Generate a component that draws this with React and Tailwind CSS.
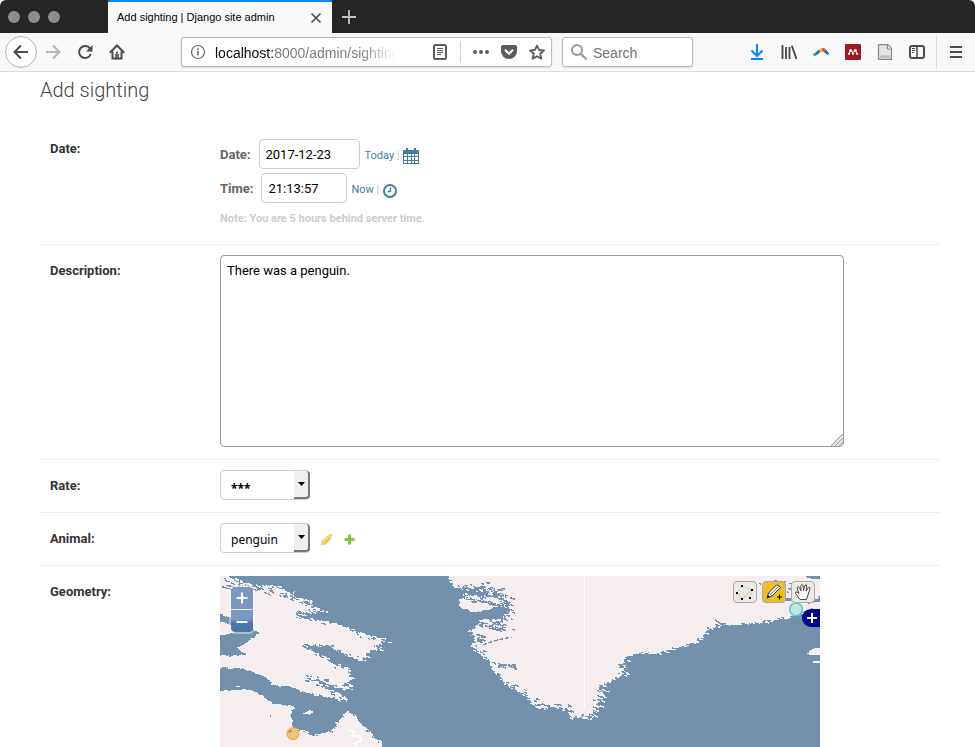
import React, { useState } from 'react';

// small repeatable generator, so the coast is the same on each render
const makeRandom = (seed) => {
  let s = seed * 7919;
  return () => {
    s = (s * 16807) % 2147483647;
    return s / 2147483647;
  };
};

// turns a rough outline into a ragged, stair-stepped shoreline
const coast = (points, seed, size = 9) => {
  const rnd = makeRandom(seed);
  let d = `M${points[0][0]} ${points[0][1]}`;
  for (let i = 1; i < points.length; i++) {
    const [x0, y0] = points[i - 1];
    const [x1, y1] = points[i];
    const outside = (x0 === x1 && Math.abs(y1 - y0) > 200) || (y0 === y1 && (y0 < 0 || y0 > 530));
    const steps = outside ? 1 : Math.max(1, Math.round(Math.hypot(x1 - x0, y1 - y0) / 7));
    for (let n = 1; n <= steps; n++) {
      const wob = n === steps ? 0 : 1;
      const x = x0 + ((x1 - x0) * n) / steps + (rnd() - 0.5) * size * 2 * wob;
      const y = y0 + ((y1 - y0) * n) / steps + (rnd() - 0.5) * size * wob;
      d += `L${x.toFixed(0)} ${y.toFixed(0)}`;
    }
  }
  return d + 'Z';
};

// short dashes scattered beside a shoreline
const flecks = (points, seed, count, spread) => {
  const rnd = makeRandom(seed);
  let d = '';
  for (let i = 0; i < count; i++) {
    const k = Math.floor(rnd() * (points.length - 1));
    const t = rnd();
    const x = points[k][0] + (points[k + 1][0] - points[k][0]) * t + (rnd() - 0.5) * spread * 2;
    const y = points[k][1] + (points[k + 1][1] - points[k][1]) * t + (rnd() - 0.5) * spread;
    d += `M${x.toFixed(0)} ${y.toFixed(0)}l${(4 + rnd() * 10).toFixed(0)} ${(rnd() * 5).toFixed(0)}`;
  }
  return d;
};

const baffin = [
  [-20, 0], [30, 0], [50, 28], [80, 42], [125, 48], [180, 50], [235, 72], [190, 78], [290, 92],
  [255, 102], [325, 122], [265, 116], [290, 130], [230, 130], [270, 148], [330, 155], [400, 178],
  [440, 195], [470, 205], [512, 212], [480, 224], [490, 236], [450, 245], [438, 270], [400, 258],
  [350, 228], [310, 222], [262, 226], [300, 250], [350, 280], [395, 300], [415, 325], [385, 340],
  [405, 356], [370, 352], [310, 325], [255, 312], [300, 335], [345, 362], [398, 388], [360, 384],
  [300, 372], [235, 352], [185, 345], [150, 318], [110, 302], [60, 292], [-20, 290], [-20, 262],
  [70, 260], [100, 248], [66, 232], [120, 205], [135, 192], [115, 172], [80, 165], [40, 138],
  [-20, 128],
];
const labrador = [
  [-20, 368], [60, 362], [110, 362], [150, 385], [180, 405], [234, 410], [228, 445], [232, 475],
  [262, 482], [290, 500], [345, 485], [375, 455], [400, 425], [425, 445], [440, 470], [475, 500],
  [500, 520], [500, 560], [-20, 560],
];
const greenlandWest = [
  [98, 0], [92, 38], [115, 52], [150, 48], [190, 62], [225, 70], [250, 90], [200, 85], [130, 75],
  [160, 90], [225, 108], [250, 100], [270, 125], [250, 150], [180, 152], [152, 188], [168, 205],
  [160, 225], [180, 250], [205, 265], [222, 300], [255, 330], [280, 355], [315, 370], [350, 412],
  [400, 408], [435, 415], [450, 435], [500, 445], [520, 430], [530, 400], [550, 375], [538, 350],
  [580, 330], [608, 312], [600, 280], [615, 265],
];
const greenlandEast = [
  [625, 255], [650, 250], [725, 247], [780, 230], [830, 212], [862, 178], [890, 168], [905, 160],
  [980, 160], [1050, 150], [1110, 142], [1145, 130], [1200, 112],
];
const greenland = [...greenlandWest, ...greenlandEast, [1210, 0]];

const CoastMap = () => (
  <svg
    viewBox="15 18 1800 513"
    className="block h-full w-full"
    shapeRendering="crispEdges"
    preserveAspectRatio="xMidYMin slice"
    aria-hidden="true"
  >
    <rect x="0" y="0" width="1830" height="560" fill="#7391ad" />
    <g fill="#f5edee" stroke="#f0f3fb" strokeWidth="4">
      <path d={coast(baffin, 71)} />
      <path d={coast(labrador, 29, 6)} />
      <g transform="translate(615 0)">
        <path d={coast(greenland, 53)} />
      </g>
      <path d="M-10 158l35 0 25 12 12 14-30 8-40 0z" />
      <path d="M270 430l14-8 8 4-8 6zM62 349h14" />
      <path d="M1785 244l12-6 30-4v18h-42zM1795 276h30" strokeWidth="5" />
      <path d="M1775 250h14" />
    </g>
    <g fill="#7391ad">
      <path d="M1770 18h50v8l-20 2-22-5zM1668 86l80 3 70-4v10h-70l-60-4z" />
      <path d="M750 54l50 4 70 20-10 8-60-14-55-6z" />
      <path d={coast([[720, 78], [765, 86], [830, 96], [868, 112], [862, 146], [800, 146], [725, 146], [715, 100]], 19, 5)} />
    </g>
    <g fill="#f5edee" stroke="#f0f3fb" strokeWidth="4">
      <path d={coast([[735, 90], [775, 92], [835, 110], [820, 118], [775, 124], [738, 110], [735, 90]], 8, 4)} />
    </g>
    <g fill="none" stroke="#f0f3fb" strokeWidth="4">
      <path d={flecks(baffin.slice(2, 42), 41, 150, 10)} />
      <g transform="translate(615 0)">
        <path d={flecks(greenlandWest, 61, 260, 13)} />
        <path d={flecks(greenlandEast, 13, 50, 6)} />
      </g>
    </g>
    <g fill="none" stroke="#7391ad" strokeWidth="4">
      <path d={flecks(baffin.slice(2, 42), 17, 130, 13)} />
      <path d={flecks([[20, 25], [60, 45], [130, 55], [230, 85], [290, 110]], 31, 40, 16)} />
      <path d={flecks(labrador.slice(4, 17), 23, 30, 9)} />
      <g transform="translate(615 0)">
        <path d={flecks(greenlandWest.slice(1, 36), 37, 220, 19)} />
        <path d={flecks([[170, 165], [265, 172]], 87, 40, 22)} />
        <path d={flecks([[180, 40], [250, 70], [265, 130]], 47, 45, 16)} />
        <path d={flecks([[240, 285], [280, 292]], 67, 18, 15)} />
        <path d={flecks(greenlandEast, 97, 45, 9)} />
        <path d={flecks([[1025, 30], [1180, 90]], 59, 24, 40)} />
        <path d="M190 225l20-8 20-6 25-6 20-3" strokeDasharray="12 5" />
      </g>
      <path d="M20 50l30 8M165 438h4M1500 148l14 12 10 6" />
    </g>
    <path d="M395 480l25 5-10 14 24-2 5 14-20 10 12 14" fill="none" stroke="#ffffff" strokeWidth="5" />
    <path d="M1107 18v395" stroke="#ffffff" strokeWidth="3" />
    <g shapeRendering="auto">
      <circle cx="234" cy="491" r="18" fill="#f0c27c" stroke="#eba42e" strokeWidth="3" />
      <path d="M219 487l8-8 5 3-8 6z" fill="#9c8862" />
      <circle cx="1743" cy="118" r="19" fill="#c8e4e4" stroke="#5fcccd" strokeWidth="5" />
    </g>
  </svg>
);

const ToolButton = ({ label, children }) => (
  <button type="button" aria-label={label} className="flex size-8 shrink-0 items-center justify-center">
    {children}
  </button>
);

const Glyph = ({ children, color = 'text-[#4a4a4f]' }) => (
  <svg
    width="16"
    height="16"
    viewBox="0 0 16 16"
    fill="none"
    stroke="currentColor"
    strokeWidth="2"
    className={`shrink-0 ${color}`}
    aria-hidden="true"
  >
    {children}
  </svg>
);

const TabBar = () => (
  <div className="flex h-[33px] shrink-0 rounded-t-md bg-[#252525]">
    <div className="flex w-[108px] items-center gap-2 pl-2">
      <span className="size-3 rounded-full bg-[#8e8c93]" />
      <span className="size-3 rounded-full bg-[#8e8c93]" />
      <span className="size-3 rounded-full bg-[#8e8c93]" />
    </div>
    <div className="flex w-56 items-center justify-between border-t-2 border-[#0a84ff] bg-[#f9f9fa] pr-2 pl-[9px] text-black">
      <span className="text-[11px] whitespace-nowrap">Add sighting | Django site admin</span>
      <button type="button" aria-label="Close tab">
        <Glyph><path d="M3.5 3.5l9 9M12.5 3.5l-9 9" strokeWidth="1.6" /></Glyph>
      </button>
    </div>
    <button type="button" aria-label="New tab" className="flex w-[34px] items-center justify-center">
      <Glyph color="text-[#c4c4c6]"><path d="M8 1v14M1 8h14" strokeWidth="1.8" /></Glyph>
    </button>
  </div>
);

const NavBar = () => {
  const [url, setUrl] = useState('localhost:8000/admin/sighting');

  return (
    <div className="flex h-[39px] shrink-0 items-center border-b border-[#dcdcdc] bg-[#f9f9fa] pl-[5px]">
      <button
        type="button"
        aria-label="Back"
        className="flex size-8 shrink-0 items-center justify-center rounded-full border border-[#b5b5b7] bg-white"
      >
        <Glyph><path d="M15 8H1.5M8 1.5L1.5 8 8 14.5" /></Glyph>
      </button>
      <ToolButton label="Forward">
        <Glyph color="text-[#b5b5b7]"><path d="M1 8h13.5M8 1.5L14.5 8 8 14.5" /></Glyph>
      </ToolButton>
      <ToolButton label="Reload">
        <Glyph>
          <path d="M13 4.5A6 6 0 1 0 13.8 10" />
          <path d="M15.5 1v6.5H9z" fill="currentColor" stroke="none" />
        </Glyph>
      </ToolButton>
      <ToolButton label="Home">
        <Glyph>
          <path d="M.8 8.8L8 1.5l7.2 7.3M3.5 7.5v7h9v-7" />
          <path d="M7 8.5h2M7 10.5h2v4H7z" strokeWidth="1.5" />
        </Glyph>
      </ToolButton>

      <div className="ml-12 flex h-[30px] min-w-0 flex-1 items-center rounded-[3px] border border-[#b9b9bb] bg-white pr-[6px] pl-2 shadow-sm">
        <Glyph color="text-[#6b6b6e]">
          <circle cx="8" cy="8" r="6.5" strokeWidth="1.2" />
          <path d="M8 7v4.5M8 4.3v1.7" strokeWidth="1.6" />
        </Glyph>
        <input
          type="text"
          aria-label="Address"
          value={url}
          onChange={(e) => setUrl(e.target.value)}
          className="ml-[9px] w-[182px] min-w-0 flex-1 bg-[linear-gradient(90deg,#0c0c0d_58px,#77777a_58px,#77777a_145px,transparent_182px)] bg-clip-text pt-[2px] text-sm text-transparent outline-none"
        />
        <button type="button" aria-label="Reader view" className="ml-4">
          <Glyph color="text-[#5c5c60]">
            <rect x="2" y="1" width="12" height="14" rx="1.5" />
            <path d="M5 4.5h6M5 6.5h6M5 8.5h6M5 10.5h4" strokeWidth="1" />
          </Glyph>
        </button>
        <span className="mx-3 h-[22px] w-px bg-[#d2d2d4]" />
        <div className="flex gap-3">
          <button type="button" aria-label="Page actions">
            <Glyph color="text-[#5c5c60]">
              <g fill="currentColor" stroke="none">
                <circle cx="2" cy="8" r="2" />
                <circle cx="8" cy="8" r="2" />
                <circle cx="14" cy="8" r="2" />
              </g>
            </Glyph>
          </button>
          <button type="button" aria-label="Save to Pocket">
            <Glyph color="text-[#5c5c60]">
              <path d="M2 1h12a2 2 0 0 1 2 2v4.5a8 7.5 0 0 1-16 0V3a2 2 0 0 1 2-2z" fill="currentColor" stroke="none" />
              <path d="M4 5.8l4 4 4-4" stroke="#fff" />
            </Glyph>
          </button>
          <button type="button" aria-label="Bookmark this page">
            <Glyph color="text-[#5c5c60]">
              <path d="M8 1.5l2 4.500 5 .5-3.800 3.300 1.200 4.900L8 12.200l-4.400 2.500 1.200-4.900L1 6.500 6 6z" strokeWidth="1.8" strokeLinejoin="round" />
            </Glyph>
          </button>
        </div>
      </div>

      <div className="ml-[10px] flex h-[30px] w-[131px] shrink-0 items-center gap-[6px] rounded-[3px] border border-[#b9b9bb] bg-white px-2 shadow-sm">
        <Glyph color="text-[#98989b]">
          <circle cx="6" cy="6" r="5" />
          <path d="M9.5 9.5l6 6" />
        </Glyph>
        <input
          type="search"
          aria-label="Search"
          placeholder="Search"
          className="w-full min-w-0 pt-[2px] text-sm outline-none placeholder:text-[#737377]"
        />
      </div>

      <div className="ml-12 flex shrink-0">
        <ToolButton label="Downloads">
          <Glyph color="text-[#0a84ff]"><path d="M8 0v12M2.5 6.5L8 12l5.5-5.5M2 15h12" /></Glyph>
        </ToolButton>
        <ToolButton label="Library">
          <Glyph><path d="M1.5 1v14M5 3v12M8.5 3v12M10.8 1.8L15.5 15" strokeWidth="1.9" /></Glyph>
        </ToolButton>
        <ToolButton label="Rainbow add-on">
          <Glyph>
            <path d="M.8 11.5l4-3" stroke="#3e9e63" strokeWidth="2.8" />
            <path d="M3.5 9.5L7 6.5" stroke="#2470a8" strokeWidth="2.6" />
            <path d="M6.5 7l3-1.500" stroke="#efb643" strokeWidth="3.4" />
            <path d="M9 5.5q2 0 3.5 2" stroke="#e2543f" strokeWidth="3.4" />
            <path d="M12 7l3.3 3" stroke="#24699c" strokeWidth="2.6" />
          </Glyph>
        </ToolButton>
        <ToolButton label="Mendeley">
          <Glyph>
            <rect width="16" height="16" rx="1" fill="#9d1a20" stroke="none" />
            <g fill="#fff" stroke="none">
              <circle cx="5.7" cy="6.5" r="1.5" />
              <circle cx="10.3" cy="6.5" r="1.5" />
              <circle cx="3.9" cy="9.8" r="1.1" />
              <circle cx="8" cy="9.5" r="1.2" />
              <circle cx="12.1" cy="9.8" r="1.1" />
            </g>
            <path d="M3.9 9.8l1.8-3.3L8 8.5l2.3-2 1.8 3.3" stroke="#fff" strokeWidth="1" />
          </Glyph>
        </ToolButton>
        <ToolButton label="Page">
          <Glyph color="text-[#868688]">
            <path d="M1.5.7h9.5l3.5 3.5v11.1h-13z" fill="#e3e3e3" strokeWidth="1.2" />
            <path d="M10.5 1v4h4" fill="#fff" strokeWidth="1" />
            <path d="M3 11.5h10v2.2H3z" fill="#b9b9b9" stroke="none" />
          </Glyph>
        </ToolButton>
        <ToolButton label="Sidebar">
          <Glyph>
            <rect x="1" y="2" width="14" height="12" rx="2" />
            <path d="M8 2v12" strokeWidth="1.5" />
            <path d="M3 4.5h3M3 6.5h3M3 8.5h2" strokeWidth="1" />
          </Glyph>
        </ToolButton>
      </div>
      <span className="ml-[3px] h-8 w-px bg-[#dcdcdc]" />
      <button type="button" aria-label="Menu" className="flex w-[38px] items-center justify-center">
        <Glyph><path d="M2 3h12M2 8h12M2 13h12" /></Glyph>
      </button>
    </div>
  );
};

const FormRow = ({ label, htmlFor, tall, last, children }) => (
  <div className={`flex px-[10px] pt-[10px] ${last ? '' : 'border-b border-[#eeeeee] pb-3'}`}>
    <label
      htmlFor={htmlFor}
      className={`w-[170px] shrink-0 text-[13px] leading-4 font-bold text-[#333333] ${tall ? 'pt-[2px]' : 'pt-2'}`}
    >
      {label}
    </label>
    <div className="min-w-0 flex-1">{children}</div>
  </div>
);

const SelectBox = ({ id, options, textClass = 'pt-[3px]' }) => (
  <div className="relative h-[30px] w-[90px]">
    <select
      id={id}
      className={`size-full appearance-none rounded border border-[#cccccc] bg-white pl-[10px] font-['Noto_Sans',sans-serif] text-xs text-black ${textClass}`}
    >
      {options.map((o) => (
        <option key={o}>{o}</option>
      ))}
    </select>
    <span className="pointer-events-none absolute inset-y-px right-0 flex w-4 items-center justify-center rounded-r border-r-2 border-b-2 border-[#777777] bg-[#efefef]">
      <svg width="7" height="4" viewBox="0 0 7 4" aria-hidden="true"><path d="M0 0h7L3.5 4z" /></svg>
    </span>
  </div>
);

const MapTools = () => (
  <>
    <div className="absolute top-[11px] left-[11px] flex flex-col gap-px rounded-sm text-white outline-2 outline-white/40">
      <button type="button" aria-label="Zoom in" className="flex h-[22px] w-[22px] items-center justify-center rounded-t bg-[#7b98c0]">
        <Glyph color="text-white"><path d="M8 2.5v11M2.5 8h11" /></Glyph>
      </button>
      <button
        type="button"
        aria-label="Zoom out"
        className="flex h-[22px] w-[22px] items-center justify-center rounded-b bg-linear-to-b from-[#7b98c0] from-40% to-[#4d76a8] to-60%"
      >
        <Glyph color="text-white"><path d="M2.5 9h11" /></Glyph>
      </button>
    </div>
    <div className="absolute top-[5px] right-[5px] flex gap-[5px]">
      <button type="button" aria-label="Edit shape" className="flex h-[22px] w-6 items-center justify-center rounded border border-[#a9a9a5] bg-[#ebebe5]">
        <svg width="20" height="18" viewBox="0 0 20 18" aria-hidden="true">
          <path d="M2 10l5-7 10 4-2 8" fill="none" stroke="#d5d5d0" />
          <path d="M2 10l5 6L17 7" fill="none" stroke="#f0aaa0" />
          <path d="M1 9h2v2H1zM6 2h2v2H6zM16 6h2v2h-2zM14 14h2v2h-2zM6 15h2v2H6z" />
        </svg>
      </button>
      <button type="button" aria-label="Draw point" className="flex h-[22px] w-6 items-center justify-center rounded border border-[#a9a9a5] bg-[#efbc2b]">
        <svg width="20" height="18" viewBox="0 0 20 18" aria-hidden="true">
          <path d="M3 15l1.5-5L13 1.5l3.5 3L8 13z" fill="#fff" stroke="#333" />
          <path d="M6 12l8-8M4.5 10L8 13" stroke="#777" />
          <path d="M3 15l1-3 2 2z" />
          <path d="M15.5 11.5v5M13 14h5" stroke="#000" />
        </svg>
      </button>
      <button type="button" aria-label="Pan" className="flex h-[22px] w-6 items-center justify-center rounded border border-[#a9a9a5] bg-[#ebebe5]">
        <svg width="20" height="18" viewBox="0 0 20 18" aria-hidden="true">
          <path
            d="M7 16.500L2.500 10.500Q2 8.500 4 9l2 1.500L4 4.500q1-2 2.300 0L8 8 7.800 2.500q1.200-2 2.200 0L10.500 7.500l1.300-5q1.500-1.500 2 .5L13 8l2.500-3.500q1.700-.8 1.500 1L15 12l-1.500 4.500z"
            fill="#fff"
            stroke="#444"
          />
        </svg>
      </button>
    </div>
    <button
      type="button"
      aria-label="Switch layer"
      className="absolute top-[33px] right-0 flex h-[18px] w-[18px] items-center justify-center rounded-l-full bg-[#00008b] pl-[2px]"
    >
      <svg width="10" height="10" viewBox="0 0 10 10" aria-hidden="true">
        <path d="M5 0v10M0 5h10" stroke="#fff" strokeWidth="2" />
      </svg>
    </button>
  </>
);

const App = () => {
  const [date, setDate] = useState('2017-12-23');
  const [time, setTime] = useState('21:13:57');
  const [description, setDescription] = useState('There was a penguin.');

  return (
    <div className="flex h-screen flex-col overflow-hidden bg-white font-['Liberation_Sans',Arial,sans-serif]">
      <TabBar />
      <NavBar />

      <main className="min-h-0 flex-1 overflow-hidden pr-[35px] pl-10 font-[Roboto,sans-serif] text-[13px]">
        <h1 className="pt-[6px] text-xl leading-6 font-light text-[#444444]">Add sighting</h1>

        <form className="mt-[27px]">
          <FormRow label="Date:" htmlFor="date" tall>
            <div className="flex h-[30px] items-center">
              <label htmlFor="date" className="mr-2 pt-[2px] font-bold text-[#666666]">Date:</label>
              <input
                id="date"
                type="text"
                value={date}
                onChange={(e) => setDate(e.target.value)}
                className="h-[30px] w-[101px] rounded border border-[#cccccc] px-[6px] text-black"
              />
              <span className="mr-[3px] ml-[5px] pt-1 text-[11px] text-[#cccccc]">
                <a href="#today" className="text-[#447e9b]">Today</a> |
              </span>
              <button type="button" aria-label="Choose a date" className="pt-1">
                <svg width="16" height="16" viewBox="0 0 16 16" aria-hidden="true">
                  <path d="M1 2h14q1 0 1 1v13H0V3q0-1 1-1zM3 0h2v2H3zM11 0h2v2h-2z" fill="#447e9b" />
                  <path d="M1 6h3v2H1zM5 6h3v2H5zM9 6h2v2H9zM12 6h3v2h-3zM1 9h3v3H1zM5 9h3v3H5zM9 9h2v3H9zM12 9h3v3h-3zM1 13h3v2H1zM5 13h3v2H5zM9 13h2v2H9zM12 13h3v2h-3z" fill="#fff" />
                </svg>
              </button>
            </div>
            <div className="mt-1 flex h-[30px] items-center">
              <label htmlFor="time" className="mr-2 pt-[2px] font-bold text-[#666666]">Time:</label>
              <input
                id="time"
                type="text"
                value={time}
                onChange={(e) => setTime(e.target.value)}
                className="h-[30px] w-[86px] rounded border border-[#cccccc] px-[6px] text-black"
              />
              <span className="mr-[3px] ml-1 pt-1 text-[11px] text-[#cccccc]">
                <a href="#now" className="text-[#447e9b]">Now</a> |
              </span>
              <button type="button" aria-label="Choose a time" className="pt-1">
                <svg width="16" height="16" viewBox="0 0 16 16" fill="none" stroke="#447e9b" aria-hidden="true">
                  <circle cx="8" cy="9" r="6" strokeWidth="2" />
                  <path d="M8.5 5.5V9.500H5.500" strokeWidth="1.3" />
                </svg>
              </button>
            </div>
            <p className="mt-2 mb-[6px] text-[11px] leading-[15px] font-bold text-[#cccccc]">
              Note: You are 5 hours behind server time.
            </p>
          </FormRow>

          <FormRow label="Description:" htmlFor="description">
            <div className="relative max-w-[624px]">
              <textarea
                id="description"
                value={description}
                onChange={(e) => setDescription(e.target.value)}
                className="block h-48 w-full resize-none rounded border border-[#999999] px-[6px] py-[5px] text-[13px] leading-5 text-black"
              />
              <svg width="12" height="12" viewBox="0 0 12 12" className="absolute right-px bottom-px" aria-hidden="true">
                <path d="M0 12L12 0M4 12l8-8M8 12l4-4" stroke="#a0a0a0" strokeWidth="1.2" />
                <path d="M2 12L12 2M6 12l6-6" stroke="#eeeeee" />
              </svg>
            </div>
          </FormRow>

          <FormRow label="Rate:" htmlFor="rate">
            <SelectBox id="rate" options={['***', '**', '*']} textClass="pt-[7px] font-bold" />
          </FormRow>

          <FormRow label="Animal:" htmlFor="animal">
            <div className="flex items-center">
              <SelectBox id="animal" options={['penguin', 'seal', 'whale']} />
              <a href="#change" aria-label="Change selected animal" className="ml-[10px] pt-[2px]">
                <svg width="13" height="13" viewBox="0 0 13 13" aria-hidden="true">
                  <path d="M1 12l1-4 6-6 3.5 3.5-6 6z" fill="#efb80b" fillOpacity=".75" />
                  <path d="M9 1.2q1-1 2 0l1 1q.8 1-.3 2L8.5 1.7z" fill="#efb80b" fillOpacity=".8" />
                  <path d="M3.5 8.5l5-5" stroke="#fff" strokeOpacity=".6" />
                </svg>
              </a>
              <a href="#add" aria-label="Add another animal" className="ml-[10px] pt-[2px]">
                <svg width="13" height="13" viewBox="0 0 13 13" aria-hidden="true">
                  <path d="M6.5 1.5v10M1.5 6.5h10" stroke="#80c64a" strokeWidth="3" />
                </svg>
              </a>
            </div>
          </FormRow>

          <FormRow label="Geometry:" last>
            <div className="relative h-[171px] w-full max-w-[600px] overflow-hidden">
              <CoastMap />
              <MapTools />
            </div>
          </FormRow>
        </form>
      </main>
    </div>
  );
};

export default App;
